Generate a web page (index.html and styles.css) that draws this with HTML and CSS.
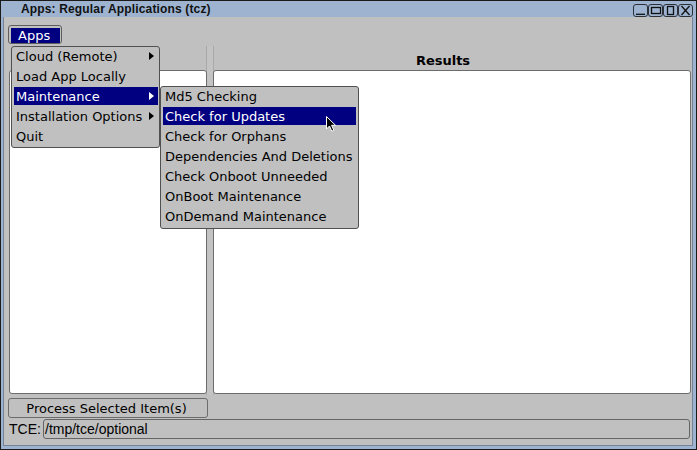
FILE: index.html
```html
<!DOCTYPE html>
<html>
<head>
<meta charset="utf-8">
<title>Apps: Regular Applications (tcz)</title>
<link rel="stylesheet" href="styles.css">
</head>
<body>
<div class="window">
  <div class="titlebar">
    <span class="title">Apps: Regular Applications (tcz)</span>
    <svg class="wbtns" width="60" height="13" viewBox="0 0 60 13">
      <g fill="none" stroke="#2b2f36" stroke-width="1">
        <rect x="0.5" y="0.5" width="14" height="12" rx="2.5"/>
        <rect x="15.5" y="0.5" width="14" height="12" rx="2.5"/>
        <rect x="30.5" y="0.5" width="14" height="12" rx="2.5"/>
        <rect x="45.5" y="0.5" width="14" height="12" rx="2.5"/>
      </g>
      <g fill="none" stroke="#111" stroke-width="1.3">
        <line x1="3" y1="10.3" x2="12" y2="10.3"/>
        <rect x="18.5" y="3.5" width="9" height="6"/>
        <rect x="34.5" y="2.5" width="6" height="8"/>
        <line x1="48.5" y1="2" x2="56.5" y2="11"/>
        <line x1="56.5" y1="2" x2="48.5" y2="11"/>
      </g>
    </svg>
  </div>
  <div class="client">
    <div class="menubar">
      <div class="mbtn"><span class="mlabel">Apps</span></div>
    </div>
    <div class="main">
      <div class="col col-left">
        <div class="colhead"></div>
        <div class="panel"></div>
      </div>
      <div class="splitter"></div>
      <div class="col col-right">
        <div class="colhead colhead-results">Results</div>
        <div class="panel"></div>
      </div>
    </div>
    <div class="actions">
      <div class="pbtn">Process Selected Item(s)</div>
    </div>
    <div class="tcerow">
      <span class="tcelabel">TCE:</span>
      <div class="field">/tmp/tce/optional</div>
    </div>
  </div>

  <div class="menu menu-main">
    <div class="item"><span>Cloud (Remote)</span><i class="arrow"></i></div>
    <div class="item"><span>Load App Locally</span></div>
    <div class="item active"><span>Maintenance</span><i class="arrow"></i></div>
    <div class="item"><span>Installation Options</span><i class="arrow"></i></div>
    <div class="item"><span>Quit</span></div>
  </div>

  <div class="menu menu-sub">
    <div class="item"><span>Md5 Checking</span></div>
    <div class="item active"><span>Check for Updates</span></div>
    <div class="item"><span>Check for Orphans</span></div>
    <div class="item"><span>Dependencies And Deletions</span></div>
    <div class="item"><span>Check Onboot Unneeded</span></div>
    <div class="item"><span>OnBoot Maintenance</span></div>
    <div class="item"><span>OnDemand Maintenance</span></div>
  </div>

  <svg class="cursor" width="12" height="18" viewBox="0 0 12 18">
    <path d="M1.5 1.5 L1.5 14 L4.5 11 L6.8 16.2 L8.8 15.3 L6.6 10.3 L10.5 10.3 Z" fill="#000" stroke="#fff" stroke-width="1" stroke-linejoin="miter"/>
  </svg>
</div>
</body>
</html>
```

FILE: styles.css
```css
html, body {
  margin: 0;
  padding: 0;
  background: #000;
}

.window {
  position: relative;
  width: 697px;
  height: 450px;
  box-sizing: border-box;
  border: 1px solid #1b1b1b;
  background: #9db3cf;
  display: flex;
  flex-direction: column;
  font-family: "DejaVu Sans", sans-serif;
  font-size: 13px;
  color: #000;
  overflow: hidden;
}

.titlebar {
  height: 16px;
  flex: none;
  display: flex;
  align-items: flex-start;
  padding: 0 3px 0 20px;
}

.title {
  font-family: "Liberation Sans", Arial, sans-serif;
  font-weight: bold;
  font-size: 12px;
  letter-spacing: 0.15px;
  line-height: 16px;
  color: #111;
}

.wbtns {
  margin-left: auto;
  margin-top: 3px;
  display: block;
}

.client {
  flex: 1;
  margin: 0 3px 3px 2px;
  border: 1px solid #74839a;
  border-top: 0;
  background: #c0c0c0;
  display: flex;
  flex-direction: column;
}

.menubar {
  height: 19px;
  padding: 8px 0 0 4px;
  flex: none;
}

.mbtn {
  width: 54px;
  height: 19px;
  box-sizing: border-box;
  border: 1px solid #5e5e5e;
  border-radius: 3px;
  padding: 2px 1px 1px 2px;
}

.mlabel {
  display: block;
  height: 15px;
  background: #000080;
  color: #fff;
  line-height: 16px;
  padding-left: 7px;
}

.main {
  margin-top: 2px;
  height: 348px;
  flex: none;
  display: flex;
  padding: 0 1px 0 5px;
}

.col {
  display: flex;
  flex-direction: column;
}

.col-left {
  width: 198px;
}

.col-right {
  flex: 1;
}

.splitter {
  width: 6px;
  background: #c3c3c3;
  box-shadow: -1px 0 0 #a9a9a9, 1px 0 0 #a9a9a9;
  margin-bottom: -1px;
}

.colhead {
  height: 24px;
  flex: none;
}

.colhead-results {
  font-weight: bold;
  text-align: center;
  line-height: 29px;
  padding-right: 18px;
}

.panel {
  flex: 1;
  background: #fff;
  border: 1px solid #6c6c6c;
  border-radius: 3px;
  position: relative;
}

.actions {
  margin-top: 4px;
  padding-left: 4px;
  flex: none;
}

.pbtn {
  width: 200px;
  height: 20px;
  box-sizing: border-box;
  border: 1px solid #6c6c6c;
  border-radius: 3px;
  text-align: center;
  line-height: 19px;
  padding-right: 3px;
}

.tcerow {
  margin-top: 1px;
  display: flex;
  align-items: center;
  padding: 0 2px 0 4px;
  flex: none;
  font-family: "Liberation Sans", Arial, sans-serif;
  font-size: 14px;
}

.tcelabel {
  width: 35px;
  padding-left: 1px;
  box-sizing: border-box;
  line-height: 18px;
}

.field {
  flex: 1;
  height: 20px;
  box-sizing: border-box;
  border: 1px solid #666;
  border-radius: 3px;
  padding-left: 1px;
  line-height: 18px;
  white-space: nowrap;
}

.menu {
  position: absolute;
  box-sizing: border-box;
  border: 1px solid #505050;
  border-radius: 3px;
  background: #c0c0c0;
  display: flex;
  flex-direction: column;
  gap: 2px;
}

.menu-main {
  left: 10px;
  top: 45px;
  width: 149px;
  height: 102px;
  padding: 0 1px 0 2px;
}

.menu-sub {
  left: 159px;
  top: 85px;
  width: 199px;
  height: 143px;
  padding: 0 2px;
}

.item {
  height: 18px;
  padding-left: 2px;
  display: flex;
  align-items: center;
  justify-content: space-between;
  white-space: nowrap;
}

.item span {
  line-height: 20px;
  height: 18px;
}

.item.active {
  background: #000080;
  color: #fff;
}

.arrow {
  width: 0;
  height: 0;
  border-left: 5px solid #000;
  border-top: 4.5px solid transparent;
  border-bottom: 4.5px solid transparent;
  margin-right: 4px;
}

.item.active .arrow {
  border-left-color: #fff;
}

.cursor {
  position: absolute;
  left: 324px;
  top: 114px;
  display: block;
}
```
